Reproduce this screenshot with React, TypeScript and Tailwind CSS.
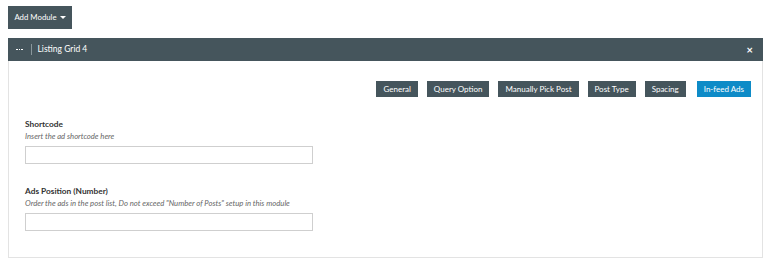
import React from "react";

const tabs = ["General", "Query Option", "Manually Pick Post", "Post Type", "Spacing", "In-feed Ads"];

function Field({ label, hint }: { label: string; hint: string }) {
  return (
    <div className="flex flex-col">
      <div className="text-[8.3px] font-bold leading-[11px] text-[#333]">{label}</div>
      <div className="mt-[1px] text-[7.7px] italic leading-[10px] text-[#666]">{hint}</div>
      <div className="mt-[5px] h-[18px] w-[288px] border border-[#cfcfcf] bg-white" />
    </div>
  );
}

export default function App() {
  return (
    <div
      className="h-[264px] w-[773px] bg-white px-[8px] pt-[6px]"
      style={{ fontFamily: 'Lato, "Open Sans", sans-serif' }}
    >
      <button className="flex h-[23px] w-[64px] items-center justify-center gap-[3px] bg-[#45555c] text-[7.8px] text-white">
        Add Module
        <span className="inline-block h-0 w-0 border-x-[3px] border-t-[3px] border-x-transparent border-t-white" />
      </button>

      <div className="mt-[9px] w-[755px]">
        {/* Header */}
        <div className="flex h-[23px] items-center bg-[#45555c] pl-[8px] pr-[10px] text-[8.5px] text-white">
          <span className="flex gap-[1px]">
            <span className="h-[1.5px] w-[1.5px] bg-white" />
            <span className="h-[1.5px] w-[1.5px] bg-white" />
            <span className="h-[1.5px] w-[1.5px] bg-white" />
          </span>
          <span className="ml-[8px] mr-[6px] h-[11px] w-px bg-[#8a979c]" />
          <span>Listing Grid 4</span>
          <span className="ml-auto text-[11px] font-bold leading-none">×</span>
        </div>

        {/* Body */}
        <div className="h-[197px] border border-t-0 border-[#e3e3e3] bg-white">
          <div className="flex justify-end gap-[9px] pr-[11px] pt-[20px]">
            {tabs.map((t) => (
              <div
                key={t}
                className={
                  "flex h-[16px] items-center px-[7px] text-[8px] text-white " +
                  (t === "In-feed Ads" ? "ml-[2px] bg-[#0e8bc7]" : "bg-[#45555c]")
                }
              >
                {t}
              </div>
            ))}
          </div>

          <div className="flex flex-col gap-[22px] pl-[16px] pt-[22px]">
            <Field label="Shortcode" hint="Insert the ad shortcode here" />
            <Field
              label="Ads Position (Number)"
              hint={'Order the ads in the post list, Do not exceed "Number of Posts" setup in this module'}
            />
          </div>
        </div>
      </div>
    </div>
  );
}
